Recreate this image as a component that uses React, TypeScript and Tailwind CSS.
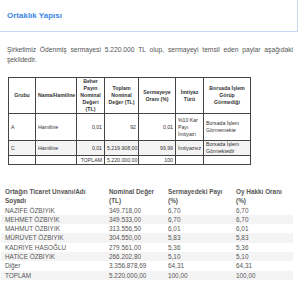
import React from 'react';

const partners = [
  { name: 'NAZİFE ÖZBIYIK', value: '349.718,00', share: '6,70', vote: '6,70' },
  { name: 'MEHMET ÖZBIYIK', value: '349.533,00', share: '6,70', vote: '6,70' },
  { name: 'MAHMUT ÖZBIYIK', value: '313.556,50', share: '6,01', vote: '6,01' },
  { name: 'MÜRÜVET ÖZBIYIK', value: '304.550,00', share: '5,83', vote: '5,83' },
  { name: 'KADRİYE HASOĞLU', value: '279.561,00', share: '5,36', vote: '5,36' },
  { name: 'HATİCE ÖZBIYIK', value: '266.202,80', share: '5,10', vote: '5,10' },
  { name: 'Diğer', value: '3.356.878,69', share: '64,31', vote: '64,31' },
  { name: 'TOPLAM', value: '5.220.000,00', share: '100,00', vote: '100,00' },
];

const cell = 'border border-[#444] px-[2px] align-middle';

export default function App() {
  return (
    <div className="w-[300px] h-[281px] overflow-hidden bg-white text-[#444]" style={{ fontFamily: '"Liberation Sans", Arial, sans-serif' }}>
      <div className="w-[298px] h-[32px] border-r border-b border-[#c6daf6] flex items-center pl-[7px]">
        <h2 className="text-[8px] font-bold text-[#3d86e6]">Ortaklık Yapısı</h2>
      </div>

      <p className="mt-[13px] mx-[7px] text-[6.7px] leading-[10px] text-justify text-[#555]">
        Şirketimiz Ödenmiş sermayesi 5.220.000 TL olup, sermayeyi temsil eden paylar aşağıdaki şekildedir.
      </p>

      <table className="ml-[8px] mt-[12px] w-[243px] table-fixed border-collapse text-[5.2px] leading-[7px] text-[#333]">
        <thead>
          <tr className="h-[35px] font-bold text-center">
            <th className={`${cell} w-[27px]`}>Grubu</th>
            <th className={`${cell} w-[41px]`}>Nama/Hamiline</th>
            <th className={`${cell} w-[28px]`}>Beher Payın Nominal Değeri (TL)</th>
            <th className={`${cell} w-[34px]`}>Toplam Nominal Değer (TL)</th>
            <th className={`${cell} w-[37px]`}>Sermayeye Oranı (%)</th>
            <th className={`${cell} w-[28px]`}>İmtiyaz Türü</th>
            <th className={`${cell}`}>Borsada İşlem Görüp Görmediği</th>
          </tr>
        </thead>
        <tbody>
          <tr className="h-[27px]">
            <td className={cell}>A</td>
            <td className={cell}>Hamiline</td>
            <td className={`${cell} text-right`}>0,01</td>
            <td className={`${cell} text-right`}>92</td>
            <td className={`${cell} text-right`}>0,01</td>
            <td className={cell}>%10 Kar Payı İmtiyazı</td>
            <td className={cell}>Borsada İşlem Görmemekte</td>
          </tr>
          <tr className="h-[15px] bg-[#f4f4f4]">
            <td className={cell}>C</td>
            <td className={cell}>Hamiline</td>
            <td className={`${cell} text-right`}>0,01</td>
            <td className={`${cell} text-right`}>5.219.908,00</td>
            <td className={`${cell} text-right`}>99,99</td>
            <td className={cell}>İmtiyazsız</td>
            <td className={cell}>Borsada İşlem Görmektedir</td>
          </tr>
          <tr className="h-[9px]">
            <td className={cell}></td>
            <td className={cell}></td>
            <td className={`${cell} text-right`}>TOPLAM</td>
            <td className={`${cell} text-right`}>5.220.000,00</td>
            <td className={`${cell} text-right`}>100</td>
            <td className={cell}></td>
            <td className={cell}></td>
          </tr>
        </tbody>
      </table>

      <table className="ml-[1px] mt-[22px] w-[292px] table-fixed border-collapse text-[6.4px] leading-[9.3px] text-[#555]">
        <thead>
          <tr className="font-semibold text-left align-top">
            <th className="pl-[4px] w-[104px]">Ortağın Ticaret Unvanı/Adı Soyadı</th>
            <th className="pl-[4px] w-[59px]">Nominal Değer (TL)</th>
            <th className="pl-[4px] w-[68px]">Sermayedeki Payı (%)</th>
            <th className="pl-[4px]">Oy Hakkı Oranı (%)</th>
          </tr>
        </thead>
        <tbody>
          {partners.map((p, i) => (
            <tr key={p.name} className={i % 2 === 1 ? 'bg-[#f4f4f4]' : ''}>
              <td className="pl-[4px]">{p.name}</td>
              <td className="pl-[4px]">{p.value}</td>
              <td className="pl-[4px]">{p.share}</td>
              <td className="pl-[4px]">{p.vote}</td>
            </tr>
          ))}
        </tbody>
      </table>
    </div>
  );
}
